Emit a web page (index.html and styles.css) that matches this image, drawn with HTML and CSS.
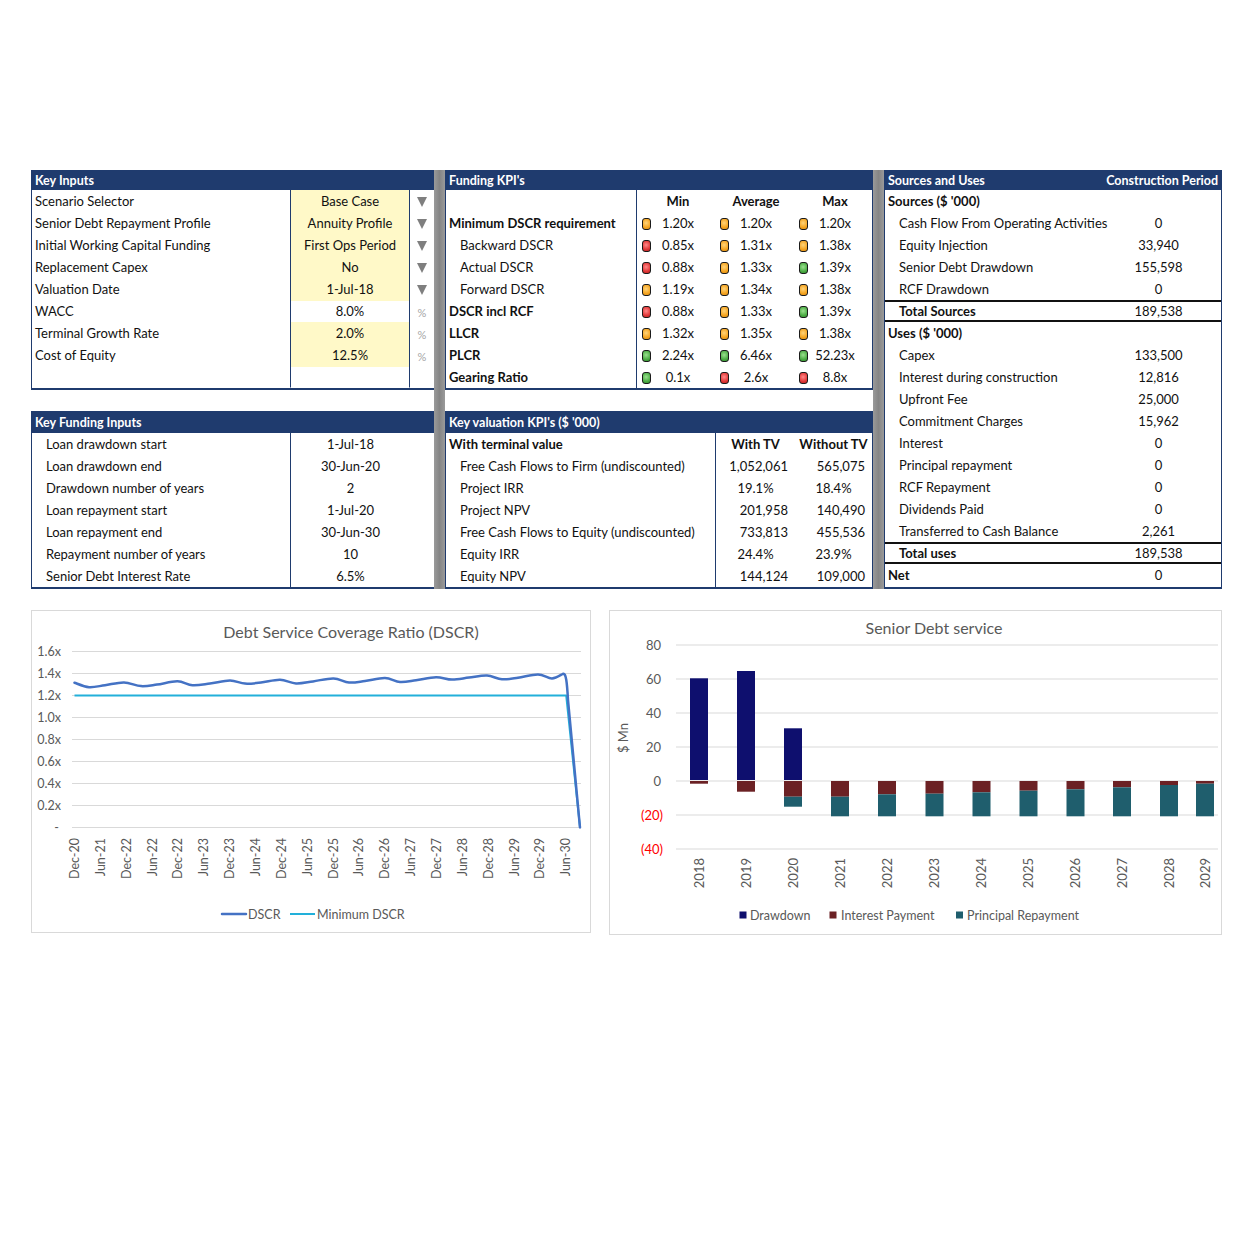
FILE: index.html
```html
<!DOCTYPE html>
<html>
<head>
<meta charset="utf-8">
<title>Project Finance Dashboard</title>
<link rel="stylesheet" href="styles.css">
</head>
<body>
<div class="dash">
  <div class="col">
    <section class="panel p1 top">
      <div class="hdr">Key Inputs</div>
      <div class="ki-row"><div class="lbl">Scenario Selector</div><div class="val y">Base Case</div><div class="dd"><span class="tri"></span></div></div>
      <div class="ki-row"><div class="lbl">Senior Debt Repayment Profile</div><div class="val y">Annuity Profile</div><div class="dd"><span class="tri"></span></div></div>
      <div class="ki-row"><div class="lbl">Initial Working Capital Funding</div><div class="val y">First Ops Period</div><div class="dd"><span class="tri"></span></div></div>
      <div class="ki-row"><div class="lbl">Replacement Capex</div><div class="val y">No</div><div class="dd"><span class="tri"></span></div></div>
      <div class="ki-row"><div class="lbl">Valuation Date</div><div class="val y">1-Jul-18</div><div class="dd"><span class="tri"></span></div></div>
      <div class="ki-row"><div class="lbl">WACC</div><div class="val">8.0%</div><div class="dd pc">%</div></div>
      <div class="ki-row"><div class="lbl">Terminal Growth Rate</div><div class="val y">2.0%</div><div class="dd pc">%</div></div>
      <div class="ki-row"><div class="lbl">Cost of Equity</div><div class="val y">12.5%</div><div class="dd pc">%</div></div>
      <div class="ki-row"><div class="lbl"></div><div class="val"></div><div class="dd"></div></div>
    </section>
    <section class="panel p1 bot">
      <div class="hdr hb">Key Funding Inputs</div>
      <div class="kf-row"><div class="lbl in">Loan drawdown start</div><div class="val">1-Jul-18</div></div>
      <div class="kf-row"><div class="lbl in">Loan drawdown end</div><div class="val">30-Jun-20</div></div>
      <div class="kf-row"><div class="lbl in">Drawdown number of years</div><div class="val">2</div></div>
      <div class="kf-row"><div class="lbl in">Loan repayment start</div><div class="val">1-Jul-20</div></div>
      <div class="kf-row"><div class="lbl in">Loan repayment end</div><div class="val">30-Jun-30</div></div>
      <div class="kf-row"><div class="lbl in">Repayment number of years</div><div class="val">10</div></div>
      <div class="kf-row"><div class="lbl in">Senior Debt Interest Rate</div><div class="val">6.5%</div></div>
    </section>
  </div>
  <div class="sep"></div>
  <div class="col">
    <section class="panel p2 top">
      <div class="hdr">Funding KPI's</div>
      <div class="fk-row hd"><div class="lbl"></div><div class="g h"><span>Min</span></div><div class="g h"><span>Average</span></div><div class="g h"><span>Max</span></div></div>
      <div class="fk-row"><div class="lbl b">Minimum DSCR requirement</div><div class="g"><i class="tl o"></i><span>1.20x</span></div><div class="g"><i class="tl o"></i><span>1.20x</span></div><div class="g"><i class="tl o"></i><span>1.20x</span></div></div>
      <div class="fk-row"><div class="lbl in">Backward DSCR</div><div class="g"><i class="tl r"></i><span>0.85x</span></div><div class="g"><i class="tl o"></i><span>1.31x</span></div><div class="g"><i class="tl o"></i><span>1.38x</span></div></div>
      <div class="fk-row"><div class="lbl in">Actual DSCR</div><div class="g"><i class="tl r"></i><span>0.88x</span></div><div class="g"><i class="tl o"></i><span>1.33x</span></div><div class="g"><i class="tl gr"></i><span>1.39x</span></div></div>
      <div class="fk-row"><div class="lbl in">Forward DSCR</div><div class="g"><i class="tl o"></i><span>1.19x</span></div><div class="g"><i class="tl o"></i><span>1.34x</span></div><div class="g"><i class="tl o"></i><span>1.38x</span></div></div>
      <div class="fk-row"><div class="lbl b">DSCR incl RCF</div><div class="g"><i class="tl r"></i><span>0.88x</span></div><div class="g"><i class="tl o"></i><span>1.33x</span></div><div class="g"><i class="tl gr"></i><span>1.39x</span></div></div>
      <div class="fk-row"><div class="lbl b">LLCR</div><div class="g"><i class="tl o"></i><span>1.32x</span></div><div class="g"><i class="tl o"></i><span>1.35x</span></div><div class="g"><i class="tl o"></i><span>1.38x</span></div></div>
      <div class="fk-row"><div class="lbl b">PLCR</div><div class="g"><i class="tl gr"></i><span>2.24x</span></div><div class="g"><i class="tl gr"></i><span>6.46x</span></div><div class="g"><i class="tl gr"></i><span>52.23x</span></div></div>
      <div class="fk-row"><div class="lbl b">Gearing Ratio</div><div class="g"><i class="tl gr"></i><span>0.1x</span></div><div class="g"><i class="tl r"></i><span>2.6x</span></div><div class="g"><i class="tl r"></i><span>8.8x</span></div></div>
    </section>
    <section class="panel p2 bot">
      <div class="hdr hb">Key valuation KPI's ($ '000)</div>
      <div class="kv-row hd"><div class="lbl b">With terminal value</div><div class="c">With TV</div><div class="c">Without TV</div></div>
      <div class="kv-row"><div class="lbl in">Free Cash Flows to Firm (undiscounted)</div><div class="n">1,052,061</div><div class="n">565,075</div></div>
      <div class="kv-row"><div class="lbl in">Project IRR</div><div class="c">19.1%</div><div class="c">18.4%</div></div>
      <div class="kv-row"><div class="lbl in">Project NPV</div><div class="n">201,958</div><div class="n">140,490</div></div>
      <div class="kv-row"><div class="lbl in">Free Cash Flows to Equity (undiscounted)</div><div class="n">733,813</div><div class="n">455,536</div></div>
      <div class="kv-row"><div class="lbl in">Equity IRR</div><div class="c">24.4%</div><div class="c">23.9%</div></div>
      <div class="kv-row"><div class="lbl in">Equity NPV</div><div class="n">144,124</div><div class="n">109,000</div></div>
    </section>
  </div>
  <div class="sep"></div>
  <section class="panel p3">
    <div class="hdr split"><span>Sources and Uses</span><span>Construction Period</span></div>
    <div class="su-row"><div class="lbl b">Sources ($ '000)</div><div class="v"></div></div>
    <div class="su-row"><div class="lbl in">Cash Flow From Operating Activities</div><div class="v">0</div></div>
    <div class="su-row"><div class="lbl in">Equity Injection</div><div class="v">33,940</div></div>
    <div class="su-row"><div class="lbl in">Senior Debt Drawdown</div><div class="v">155,598</div></div>
    <div class="su-row"><div class="lbl in">RCF Drawdown</div><div class="v">0</div></div>
    <div class="su-row tot"><div class="lbl in b">Total Sources</div><div class="v">189,538</div></div>
    <div class="su-row"><div class="lbl b">Uses ($ '000)</div><div class="v"></div></div>
    <div class="su-row"><div class="lbl in">Capex</div><div class="v">133,500</div></div>
    <div class="su-row"><div class="lbl in">Interest during construction</div><div class="v">12,816</div></div>
    <div class="su-row"><div class="lbl in">Upfront Fee</div><div class="v">25,000</div></div>
    <div class="su-row"><div class="lbl in">Commitment Charges</div><div class="v">15,962</div></div>
    <div class="su-row"><div class="lbl in">Interest</div><div class="v">0</div></div>
    <div class="su-row"><div class="lbl in">Principal repayment</div><div class="v">0</div></div>
    <div class="su-row"><div class="lbl in">RCF Repayment</div><div class="v">0</div></div>
    <div class="su-row"><div class="lbl in">Dividends Paid</div><div class="v">0</div></div>
    <div class="su-row"><div class="lbl in">Transferred to Cash Balance</div><div class="v">2,261</div></div>
    <div class="su-row tot"><div class="lbl in b">Total uses</div><div class="v">189,538</div></div>
    <div class="su-row"><div class="lbl b">Net</div><div class="v">0</div></div>
  </section>
</div>

<div class="charts">
  <div class="chart c1">
    <svg width="558" height="321" viewBox="32 611 558 321" xmlns="http://www.w3.org/2000/svg">
      <text class="ttl" x="351" y="638" text-anchor="middle">Debt Service Coverage Ratio (DSCR)</text>
      <g class="grid">
        <line x1="72" x2="581" y1="651.5" y2="651.5"/>
        <line x1="72" x2="581" y1="673.5" y2="673.5"/>
        <line x1="72" x2="581" y1="695.5" y2="695.5"/>
        <line x1="72" x2="581" y1="717.5" y2="717.5"/>
        <line x1="72" x2="581" y1="739.5" y2="739.5"/>
        <line x1="72" x2="581" y1="761.5" y2="761.5"/>
        <line x1="72" x2="581" y1="783.5" y2="783.5"/>
        <line x1="72" x2="581" y1="805.5" y2="805.5"/>
        <line x1="72" x2="581" y1="827.5" y2="827.5"/>
      </g>
      <g class="ax" text-anchor="end">
        <text x="61" y="655.5">1.6x</text>
        <text x="61" y="677.5">1.4x</text>
        <text x="61" y="699.5">1.2x</text>
        <text x="61" y="721.5">1.0x</text>
        <text x="61" y="743.5">0.8x</text>
        <text x="61" y="765.5">0.6x</text>
        <text x="61" y="787.5">0.4x</text>
        <text x="61" y="809.5">0.2x</text>
        <text x="59" y="831.5">-</text>
      </g>
      <polyline class="mind" points="74.5,695.5 566.2,695.5 580,827.5"/>
      <path id="dscrPath" class="dscr" data-points="74.5,682.7 89,687.2 105,685.2 124,682.4 141,686.1 157,684.6 177.5,681.3 192.5,685.3 210,683.6 230,680.6 245,683.6 261,682.6 280,679.8 296,683.4 313,681.4 333.5,678.4 349,682.5 365,681 385,678 400,682 416,680.3 436,677.2 452,679.6 469,677.6 487,675.6 502,679.3 518,677.8 538,674.4 552,678.4 563,673.8" d="M74.5,682.7 L89,687.2 L124,682.4 L141,686.1 L177.5,681.3 L192.5,685.3 L230,680.6 L245,683.6 L280,679.8 L296,683.4 L333.5,678.4 L349,682.5 L385,678 L400,682 L436,677.2 L452,679.6 L487,675.6 L502,679.3 L538,674.4 L552,678.4 L563,673.8 L567,676 L580,827.5"/>
      <g class="ax" text-anchor="end">
        <text transform="translate(79,838) rotate(-90)">Dec-20</text>
        <text transform="translate(104.9,838) rotate(-90)">Jun-21</text>
        <text transform="translate(130.7,838) rotate(-90)">Dec-22</text>
        <text transform="translate(156.6,838) rotate(-90)">Jun-22</text>
        <text transform="translate(182.4,838) rotate(-90)">Dec-22</text>
        <text transform="translate(208.3,838) rotate(-90)">Jun-23</text>
        <text transform="translate(234.1,838) rotate(-90)">Dec-23</text>
        <text transform="translate(260,838) rotate(-90)">Jun-24</text>
        <text transform="translate(285.8,838) rotate(-90)">Dec-24</text>
        <text transform="translate(311.7,838) rotate(-90)">Jun-25</text>
        <text transform="translate(337.5,838) rotate(-90)">Dec-25</text>
        <text transform="translate(363.4,838) rotate(-90)">Jun-26</text>
        <text transform="translate(389.2,838) rotate(-90)">Dec-26</text>
        <text transform="translate(415.1,838) rotate(-90)">Jun-27</text>
        <text transform="translate(440.9,838) rotate(-90)">Dec-27</text>
        <text transform="translate(466.8,838) rotate(-90)">Jun-28</text>
        <text transform="translate(492.6,838) rotate(-90)">Dec-28</text>
        <text transform="translate(518.5,838) rotate(-90)">Jun-29</text>
        <text transform="translate(544.3,838) rotate(-90)">Dec-29</text>
        <text transform="translate(570.2,838) rotate(-90)">Jun-30</text>
      </g>
      <line class="dscr" x1="222" x2="246" y1="914" y2="914"/>
      <text class="lg" x="248" y="918.5">DSCR</text>
      <line class="mind" x1="290" x2="315" y1="914" y2="914"/>
      <text class="lg" x="317" y="918.5">Minimum DSCR</text>
    </svg>
  </div>
  <div class="chart c2">
    <svg width="611" height="323" viewBox="610 611 611 323" xmlns="http://www.w3.org/2000/svg">
      <text class="ttl" x="934" y="634" text-anchor="middle">Senior Debt service</text>
      <g class="grid">
        <line x1="676" x2="1218" y1="645" y2="645"/>
        <line x1="676" x2="1218" y1="679" y2="679"/>
        <line x1="676" x2="1218" y1="713" y2="713"/>
        <line x1="676" x2="1218" y1="747" y2="747"/>
        <line x1="676" x2="1218" y1="781" y2="781"/>
        <line x1="676" x2="1218" y1="815" y2="815"/>
        <line x1="676" x2="1218" y1="849" y2="849"/>
      </g>
      <g class="ax2" text-anchor="end">
        <text x="661" y="649.5">80</text>
        <text x="661" y="683.5">60</text>
        <text x="661" y="717.5">40</text>
        <text x="661" y="751.5">20</text>
        <text x="661" y="785.5">0</text>
        <text class="neg" x="663" y="819.5">(20)</text>
        <text class="neg" x="663" y="853.5">(40)</text>
      </g>
      <text class="ax2" text-anchor="middle" transform="translate(628,738) rotate(-90)">$ Mn</text>
      <g class="dd2">
        <rect x="690" y="678.3" width="18" height="101.7"/>
        <rect x="737" y="671" width="18" height="109"/>
        <rect x="784" y="728.3" width="18" height="51.7"/>
      </g>
      <g class="ip">
        <rect x="690" y="781" width="18" height="2.7"/>
        <rect x="737" y="781" width="18" height="10.7"/>
        <rect x="784" y="781" width="18" height="15.7"/>
        <rect x="831" y="781" width="18" height="15.7"/>
        <rect x="878" y="781" width="18" height="13.3"/>
        <rect x="925.5" y="781" width="18" height="12.7"/>
        <rect x="972.5" y="781" width="18" height="11.3"/>
        <rect x="1019.5" y="781" width="18" height="9.7"/>
        <rect x="1066.5" y="781" width="18" height="8.3"/>
        <rect x="1113" y="781" width="18" height="6.3"/>
        <rect x="1160" y="781" width="18" height="4"/>
        <rect x="1196" y="781" width="18" height="2.7"/>
      </g>
      <g class="pr">
        <rect x="784" y="796.7" width="18" height="10"/>
        <rect x="831" y="796.7" width="18" height="19.6"/>
        <rect x="878" y="794.3" width="18" height="22"/>
        <rect x="925.5" y="793.7" width="18" height="22.6"/>
        <rect x="972.5" y="792.3" width="18" height="24"/>
        <rect x="1019.5" y="790.7" width="18" height="25.6"/>
        <rect x="1066.5" y="789.3" width="18" height="27"/>
        <rect x="1113" y="787.3" width="18" height="29"/>
        <rect x="1160" y="785" width="18" height="31.3"/>
        <rect x="1196" y="783.7" width="18" height="32.6"/>
      </g>
      <g class="ax2" text-anchor="end">
        <text transform="translate(703.5,858) rotate(-90)">2018</text>
        <text transform="translate(750.5,858) rotate(-90)">2019</text>
        <text transform="translate(797.5,858) rotate(-90)">2020</text>
        <text transform="translate(844.5,858) rotate(-90)">2021</text>
        <text transform="translate(891.5,858) rotate(-90)">2022</text>
        <text transform="translate(939,858) rotate(-90)">2023</text>
        <text transform="translate(986,858) rotate(-90)">2024</text>
        <text transform="translate(1033,858) rotate(-90)">2025</text>
        <text transform="translate(1080,858) rotate(-90)">2026</text>
        <text transform="translate(1126.5,858) rotate(-90)">2027</text>
        <text transform="translate(1173.5,858) rotate(-90)">2028</text>
        <text transform="translate(1209.5,858) rotate(-90)">2029</text>
      </g>
      <rect class="dd2" x="739.5" y="911.5" width="7" height="7"/>
      <text class="lg" x="750" y="919.5">Drawdown</text>
      <rect class="ip" x="829.5" y="911.5" width="7" height="7"/>
      <text class="lg" x="841" y="919.5">Interest Payment</text>
      <rect class="pr" x="956" y="911.5" width="7" height="7"/>
      <text class="lg" x="967" y="919.5">Principal Repayment</text>
    </svg>
  </div>
</div>
<script src="script.js"></script>
</body>
</html>
```

FILE: styles.css
```css
* { box-sizing: border-box; }
html, body { margin: 0; padding: 0; background: #ffffff; }
body {
  font-family: "Lato", "Open Sans", sans-serif;
  font-size: 13px;
  color: #111111;
  width: 1254px;
  height: 1254px;
}

.dash {
  display: grid;
  grid-template-columns: 403px 11px 428px 11px 338px;
  margin: 170px 0 0 31px;
}

.col {
  display: flex;
  flex-direction: column;
  gap: 21px;
}

.sep {
  background: linear-gradient(90deg, #9a9a9a, #858585 50%, #9a9a9a);
}

.panel { background: #fff; }
.panel.top { border-bottom: 2px solid #1f3b6e; }
.panel.bot { border-bottom: 2px solid #1f3b6e; }
.p1 { border-left: 1px solid #1f3b6e; }
.p2 { border-left: 1px solid #1f3b6e; border-right: 1px solid #1f3b6e; }
.p3 {
  border-left: 1.5px solid #1f3b6e;
  border-right: 1.5px solid #1f3b6e;
  border-bottom: 2px solid #1f3b6e;
}

.hdr {
  height: 20px;
  line-height: 21px;
  background: #1f3b6e;
  color: #ffffff;
  font-weight: 700;
  font-size: 12.5px;
  padding-left: 3px;
  white-space: nowrap;
}
.hdr.hb { height: 22px; line-height: 23px; }
.hdr.split {
  display: flex;
  justify-content: space-between;
  padding-right: 3px;
}

.lbl { padding-left: 3px; white-space: nowrap; }
.lbl.in { padding-left: 14px; }
.b { font-weight: 700; }

/* Key Inputs */
.ki-row {
  display: grid;
  grid-template-columns: 258px 120px 24px;
  height: 22px;
  line-height: 23px;
}
.ki-row .val {
  text-align: center;
  border-left: 1.5px solid #1f3b6e;
  border-right: 1.5px solid #1f3b6e;
  border-bottom: 1px solid #ffffff;
}
.ki-row .val.y { background: #fff9c8; }
.dd {
  display: flex;
  align-items: center;
  justify-content: center;
}
.tri {
  width: 0;
  height: 0;
  border-left: 5px solid transparent;
  border-right: 5px solid transparent;
  border-top: 10px solid #7f7f7f;
}
.dd.pc { color: #a6a6a6; font-size: 11px; }

/* Key funding inputs */
.kf-row {
  display: grid;
  grid-template-columns: 258px 144px;
  height: 22px;
  line-height: 23px;
}
.kf-row .val {
  border-left: 1.5px solid #1f3b6e;
  text-align: center;
  padding-right: 24px;
}

/* Funding KPIs */
.fk-row {
  display: grid;
  grid-template-columns: 191px 78px 79px 78px;
  height: 22px;
  line-height: 23px;
}
.fk-row .lbl { border-right: 1.5px solid #1f3b6e; }
.fk-row.hd { font-weight: 700; }
.g {
  display: flex;
  align-items: center;
  padding-left: 5px;
}
.g.h { padding-left: 14px; }
.g span { width: 54px; text-align: center; }
.tl {
  display: block;
  flex: none;
  width: 9px;
  height: 12px;
  border: 1.5px solid #1a1a1a;
  border-radius: 3px;
}
.tl.o { background: radial-gradient(circle at 45% 40%, #ffd47a 0, #f6a623 60%, #d98a10 100%); }
.tl.r { background: radial-gradient(circle at 45% 40%, #ff8a8a 0, #e23a3a 60%, #b81f1f 100%); }
.tl.gr { background: radial-gradient(circle at 45% 40%, #9be08f 0, #4fae47 60%, #2f8a2a 100%); }

/* Key valuation KPIs */
.kv-row {
  display: grid;
  grid-template-columns: 270px 79px 77px;
  height: 22px;
  line-height: 23px;
}
.kv-row .lbl { border-right: 1.5px solid #1f3b6e; }
.kv-row.hd .c { font-weight: 700; }
.kv-row .c { text-align: center; white-space: nowrap; }
.kv-row .n { text-align: right; padding-right: 7px; }

/* Sources and uses */
.su-row {
  display: grid;
  grid-template-columns: 212px 123px;
  height: 22px;
  line-height: 23px;
}
.su-row .v { text-align: center; }
.su-row.tot {
  border-top: 2px solid #111111;
  border-bottom: 2px solid #111111;
  line-height: 19px;
}

/* Charts */
.charts {
  display: flex;
  gap: 18px;
  margin: 21px 0 0 31px;
  align-items: flex-start;
}
.chart {
  border: 1px solid #d9d9d9;
  background: #ffffff;
}
.chart svg { display: block; }
.c1 { width: 560px; height: 323px; }
.c2 { width: 613px; height: 325px; }

.ttl { font-family: "Lato", sans-serif; font-size: 16px; fill: #595959; }
.grid line { stroke: #d9d9d9; stroke-width: 1; }
.ax { font-family: "Lato", sans-serif; font-size: 12.5px; fill: #595959; }
.ax2 { font-family: "Lato", sans-serif; font-size: 13px; fill: #595959; }
.ax2 .neg { fill: #ff0000; }
.lg { font-family: "Lato", sans-serif; font-size: 12.5px; fill: #595959; }
.dscr { fill: none; stroke: #4472c4; stroke-width: 2.5; stroke-linejoin: round; stroke-linecap: round; }
.mind { fill: none; stroke: #22b0da; stroke-width: 2; stroke-linejoin: round; }
.dd2, .dd2 rect { fill: #0e0f6e; }
.ip, .ip rect { fill: #6b2124; }
.pr, .pr rect { fill: #1f5e6d; }
```

FILE: script.js
```js
(function () {
  var path = document.getElementById('dscrPath');
  if (!path) return;
  var pts = path.getAttribute('data-points').trim().split(/\s+/).map(function (p) {
    var a = p.split(',');
    return [parseFloat(a[0]), parseFloat(a[1])];
  });
  var d = 'M' + pts[0][0] + ',' + pts[0][1];
  for (var i = 0; i < pts.length - 1; i++) {
    var p0 = pts[i - 1] || pts[i];
    var p1 = pts[i];
    var p2 = pts[i + 1];
    var p3 = pts[i + 2] || p2;
    var c1x = p1[0] + (p2[0] - p0[0]) / 6;
    var c1y = p1[1] + (p2[1] - p0[1]) / 6;
    var c2x = p2[0] - (p3[0] - p1[0]) / 6;
    var c2y = p2[1] - (p3[1] - p1[1]) / 6;
    d += ' C' + c1x.toFixed(2) + ',' + c1y.toFixed(2) + ' ' + c2x.toFixed(2) + ',' + c2y.toFixed(2) + ' ' + p2[0] + ',' + p2[1];
  }
  var last = pts[pts.length - 1];
  d += ' C' + (last[0] + 3) + ',' + (last[1] - 1) + ' ' + (last[0] + 4) + ',' + (last[1] + 8) + ' 568,700';
  d += ' L580,827.5';
  path.setAttribute('d', d);
})();
```
